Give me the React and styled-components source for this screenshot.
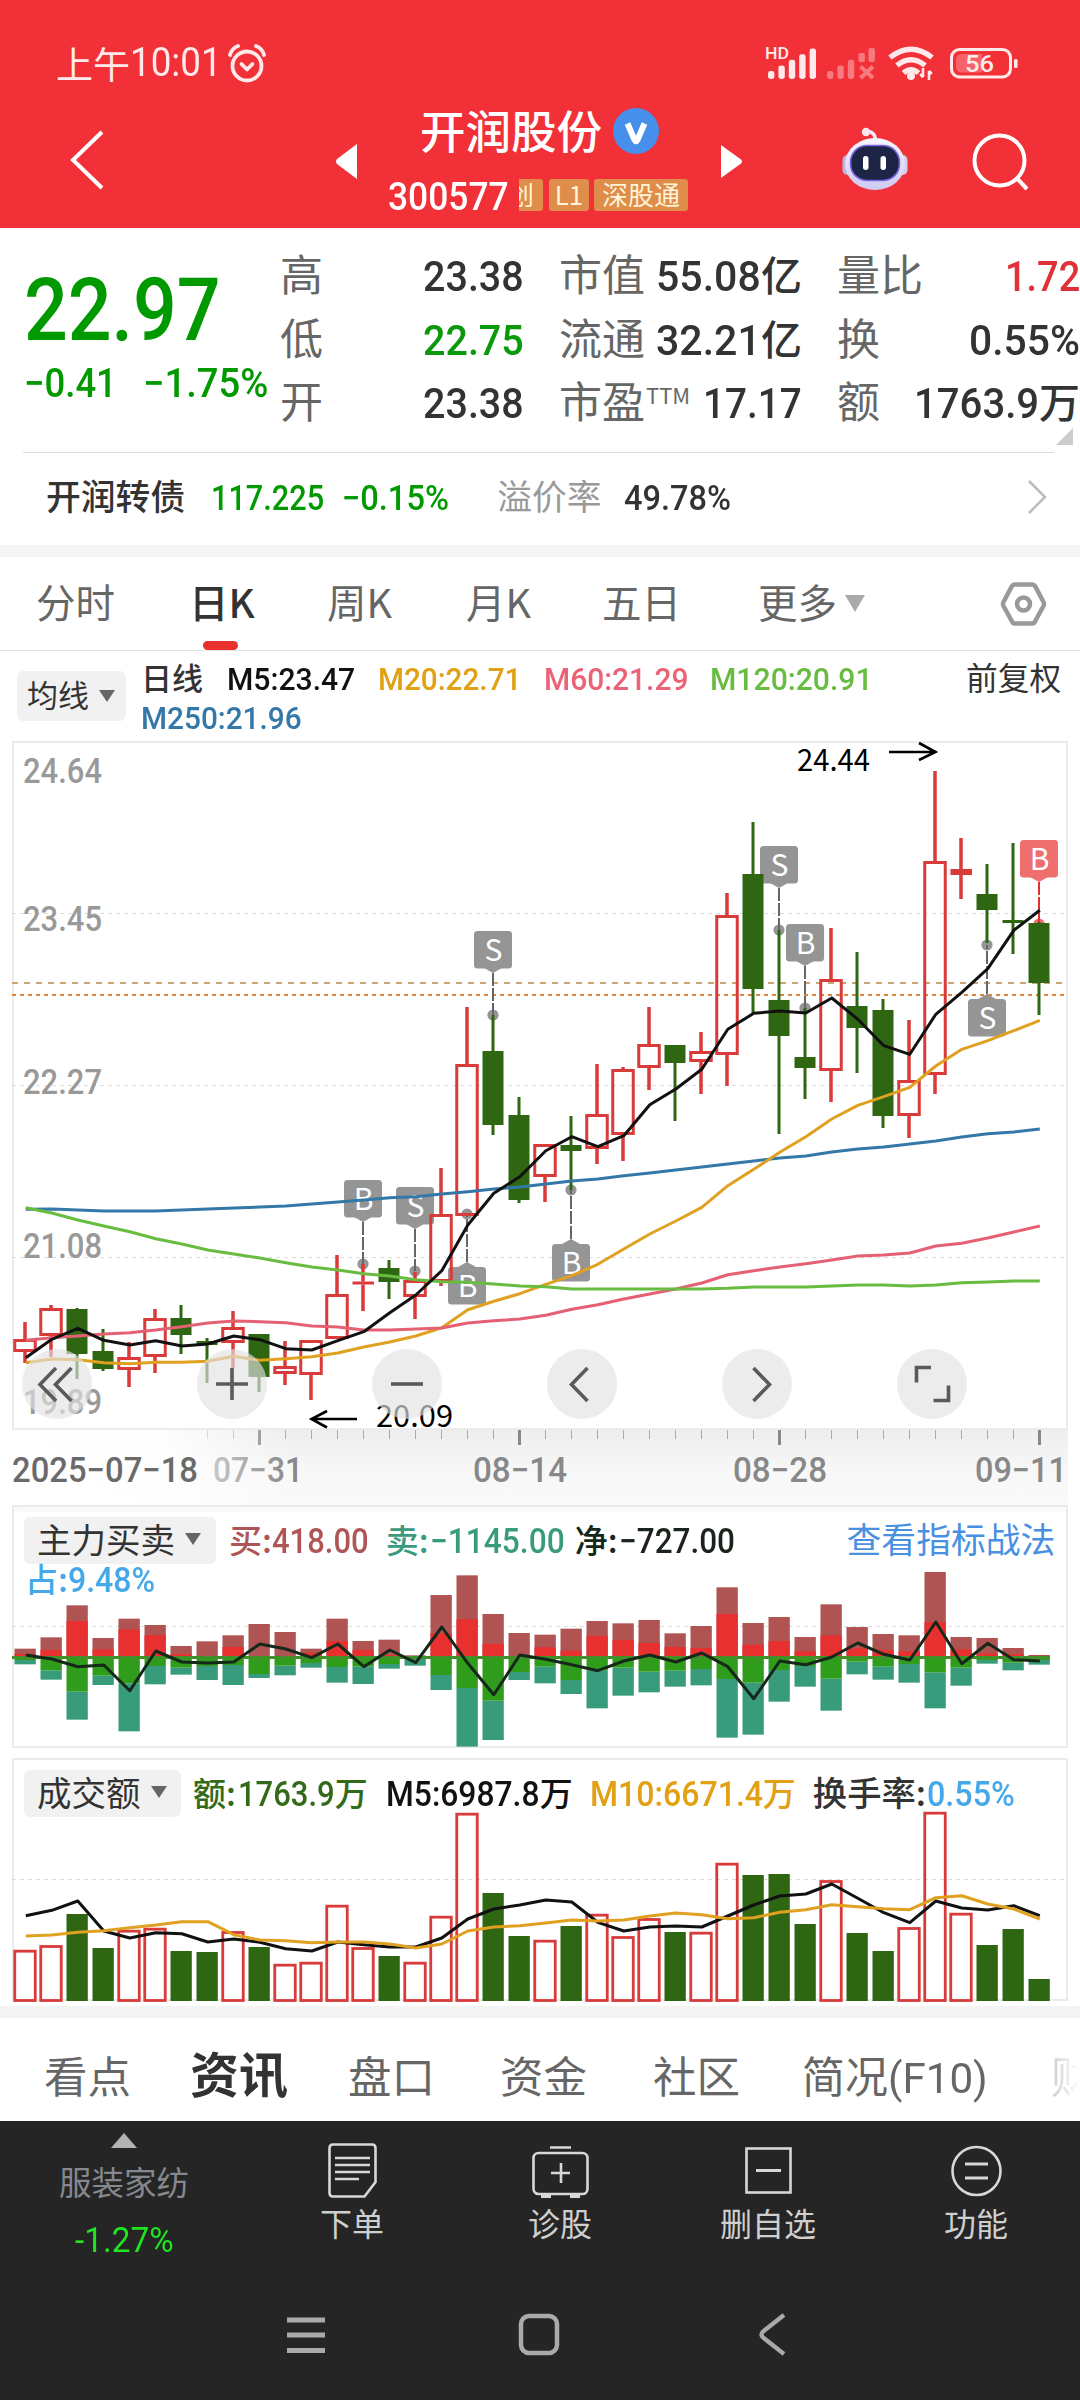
import React, { useLayoutEffect, useRef, useState } from 'react'
import styled, { createGlobalStyle } from 'styled-components'

const CJK = "'Noto Sans CJK SC', sans-serif"
const DIGITS = "Roboto, 'Noto Sans CJK SC', sans-serif"

const RED = '#e83030'
const LINE_RED = '#d93a3a'
const GREEN = '#2f6612'
const DOWN = '#009900'

const GlobalStyle = createGlobalStyle`
  * {
    box-sizing: border-box;
  }
  body {
    margin: 0;
    background: #fff;
    font-family: ${CJK};
    color: #333;
  }
  svg {
    display: block;
    flex: none;
  }
`

const Screen = styled.div`
  width: 1080px;
  height: 2400px;
  overflow: hidden;
  display: flex;
  flex-direction: column;
`

/* ---------- condensed label ---------- */

const FitBox = styled.span`
  display: inline-block;
  flex: none;
  width: ${p => p.$w}px;
  margin-left: ${p => p.$ml || 0}px;
  font-family: ${DIGITS};
  font-size: ${p => p.$size}px;
  font-weight: ${p => p.$weight || 500};
  color: ${p => p.$color || 'inherit'};
  white-space: nowrap;
`

const FitInner = styled.span`
  display: inline-block;
  transform-origin: 0 50%;
`

// squeezes a run of digits to the width of a condensed face
const Fit = ({ w, size, ml, color, weight, children }) => {
  const ref = useRef(null)
  const [scale, setScale] = useState(1)
  useLayoutEffect(() => {
    setScale(w / ref.current.offsetWidth)
  }, [w, size, children])
  return (
    <FitBox $w={w} $size={size} $ml={ml} $color={color} $weight={weight}>
      <FitInner ref={ref} style={{ transform: `scaleX(${scale})` }}>
        {children}
      </FitInner>
    </FitBox>
  )
}

const Txt = styled.span`
  flex: none;
  margin-left: ${p => p.$ml || 0}px;
  font-size: ${p => p.$size}px;
  font-weight: ${p => p.$weight || 400};
  color: ${p => p.$color || 'inherit'};
  white-space: nowrap;
`

/* ---------- header ---------- */

const Header = styled.header`
  height: 228px;
  flex: none;
  background: #f13037;
  color: #fff;
`

const StatusBar = styled.div`
  height: 102px;
  padding: 40px 57px 0 56px;
  display: flex;
  justify-content: space-between;
`

const StatusSide = styled.div`
  display: flex;
  align-items: flex-start;
  height: 46px;
  line-height: 46px;
  color: #ffe9ea;
`

const TitleBar = styled.div`
  display: flex;
  height: 126px;
`

const TitleSlot = styled.div`
  width: ${p => p.$w}px;
  padding-top: ${p => p.$top}px;
  padding-left: ${p => p.$left || 0}px;
`

const TitleRow = styled.div`
  display: flex;
  height: 58px;
  padding-left: 60px;
  font-size: 45.5px;
  font-weight: 500;
  line-height: 54px;
  & svg {
    margin: 6px 0 0 11px;
  }
`

const CodeRow = styled.div`
  display: flex;
  align-items: center;
  height: 36px;
  margin-top: 17px;
  padding-left: 28px;
`

const CodeText = styled.div`
  padding-top: 3px;
`

const Tag = styled.span`
  width: ${p => p.$w}px;
  height: 32px;
  margin-left: ${p => p.$ml}px;
  display: flex;
  justify-content: ${p => (p.$cut ? 'flex-end' : 'center')};
  overflow: ${p => (p.$cut ? 'hidden' : 'visible')};
  padding-right: ${p => (p.$cut ? 9 : 0)}px;
  border-radius: ${p => (p.$cut ? '0 3px 3px 0' : '3px')};
  background: #df8d4a;
  color: #fff3d8;
  font-size: 26px;
  line-height: 29px;
  white-space: nowrap;
`

const AlarmIcon = () => (
  <svg width='38' height='40' viewBox='0 0 38 40' fill='none' stroke='#ffe9ea' strokeWidth='3.8' style={{ marginLeft: 6, marginTop: 4 }}>
    <circle cx='19' cy='22' r='14.5' />
    <path d='M2 11 Q3.5 4.5 10 2 M36 11 Q34.5 4.5 28 2' strokeLinecap='round' />
    <path d='M13.5 20 L19 25.5 L24.5 20' strokeLinecap='round' strokeLinejoin='round' />
  </svg>
)

const SignalIcons = () => (
  <svg width='258' height='46' viewBox='765 40 258 46' fill='#ffe9ea'>
    <text x='765' y='59' fontSize='16' fontFamily='Roboto' fontWeight='500' textLength='24' lengthAdjust='spacingAndGlyphs'>HD</text>
    {[0, 1, 2, 3, 4].map(i => (
      <rect key={i} x={768 + i * 10.4} y={71 - i * 5.6} width='6.4' height={8 + i * 5.6} rx='2.4' />
    ))}
    <g opacity='.4'>
      {[0, 1, 2].map(i => (
        <rect key={i} x={827 + i * 10.4} y={71 - i * 5.6} width='6.4' height={8 + i * 5.6} rx='2.4' />
      ))}
      <rect x='858.5' y='53' width='6.4' height='9' rx='2' />
      <rect x='868.5' y='48' width='6.4' height='14' rx='2' />
      <path d='M860.5 66.5 L873 78 M873 66.5 L860.5 78' stroke='#ffe9ea' strokeWidth='4' />
    </g>
    <g fill='none' stroke='#ffe9ea' strokeWidth='5.4'>
      <path d='M890 57.5 Q911 41 932 57.5' />
      <path d='M897 65.5 Q911 54 925 65.5' />
      <path d='M903.5 73 Q911 66.5 918.5 73' />
    </g>
    <circle cx='911' cy='76' r='4' />
    <path d='M923 68 v9 M920.2 74 l2.8 3.4 M929 80 v-9 M931.8 74 l-2.8 -3' stroke='#ffe9ea' strokeWidth='2.6' fill='none' />
    <rect x='951.5' y='49.5' width='59' height='27.5' rx='8' fill='none' stroke='#ffe9ea' strokeWidth='3' />
    <path d='M962 54 h20 v18.5 h-20 q-6 0 -6 -6 v-6.5 q0 -6 6 -6z' opacity='.28' />
    <rect x='1014' y='59' width='3.6' height='9' rx='1.5' />
    <text x='965' y='72' fontSize='24' fontFamily='Roboto' fontWeight='500' textLength='29' lengthAdjust='spacingAndGlyphs'>56</text>
  </svg>
)

const RobotIcon = () => (
  <svg width='68' height='66' viewBox='0 0 68 66'>
    <defs>
      <linearGradient id='shell' x1='0' y1='0' x2='0' y2='1'>
        <stop offset='0' stopColor='#f8f6ff' />
        <stop offset='1' stopColor='#cfc9f0' />
      </linearGradient>
    </defs>
    <path d='M33 14 Q34 6 24 5' stroke='#f3e9fb' strokeWidth='3.5' fill='none' />
    <circle cx='24' cy='6' r='4.2' fill='#fbe6f0' />
    <rect x='0.500' y='29' width='10' height='20' rx='5' fill='#b9b4e6' />
    <rect x='55.500' y='29' width='10' height='20' rx='5' fill='#d6cff2' />
    <ellipse cx='33' cy='38' rx='30' ry='26' fill='url(#shell)' />
    <rect x='8.500' y='19.500' width='49' height='35' rx='16.500' fill='#1d2547' stroke='#7a66e0' strokeWidth='1.600' />
    <rect x='21' y='30' width='5.500' height='14' rx='2.700' fill='#fff' />
    <rect x='38.500' y='30' width='5.500' height='14' rx='2.700' fill='#fff' />
  </svg>
)

const TopHeader = () => (
  <Header>
    <StatusBar>
      <StatusSide>
        <Txt $size={37}>上午</Txt>
        <Fit w={92} size={40} weight={400}>10:01</Fit>
        <AlarmIcon />
      </StatusSide>
      <StatusSide>
        <SignalIcons />
      </StatusSide>
    </StatusBar>
    <TitleBar>
      <TitleSlot $w={335} $top={28} $left={69}>
        <svg width='36' height='60' viewBox='0 0 36 60' fill='none' stroke='#fff' strokeWidth='4'>
          <path d='M33 2 L4 30 L33 58' />
        </svg>
      </TitleSlot>
      <TitleSlot $w={25} $top={42}>
        <svg width='22' height='35' viewBox='0 0 22 35' fill='#fff'>
          <path d='M22 0 V35 L2 20 Q0 17.500 2 15 Z' />
        </svg>
      </TitleSlot>
      <TitleSlot $w={361}>
        <TitleRow>
          开润股份
          <svg width='46' height='46' viewBox='0 0 46 46'>
            <circle cx='23' cy='23' r='23' fill='#4690ec' />
            <path d='M14.500 15.500 L21.500 32 Q23 34.500 24.500 32 L31.500 15.500' fill='none' stroke='#fff' strokeWidth='6' />
          </svg>
        </TitleRow>
        <CodeRow>
          <CodeText>
            <Fit w={121} size={38}>300577</Fit>
          </CodeText>
          <Tag $w={24} $ml={10} $cut>创</Tag>
          <Tag $w={40} $ml={6}>L1</Tag>
          <Tag $w={94} $ml={5}>深股通</Tag>
        </CodeRow>
      </TitleSlot>
      <TitleSlot $w={121} $top={43}>
        <svg width='22' height='33' viewBox='0 0 22 33' fill='#fff'>
          <path d='M0 0 V33 L20 18.500 Q22 16.500 20 14.500 Z' />
        </svg>
      </TitleSlot>
      <TitleSlot $w={130} $top={24}>
        <RobotIcon />
      </TitleSlot>
      <TitleSlot $w={70} $top={31}>
        <svg width='58' height='58' viewBox='0 0 58 58' fill='none' stroke='#fff' strokeWidth='4'>
          <circle cx='27.500' cy='27.500' r='25' />
          <path d='M45 45.500 L55 56' />
        </svg>
      </TitleSlot>
    </TitleBar>
  </Header>
)

/* ---------- quote ---------- */

const Quote = styled.section`
  position: relative;
  height: 223px;
  flex: none;
  display: flex;
  padding-top: 13px;
`

const PriceCol = styled.div`
  width: 280px;
  padding-left: 24px;
  flex: none;
`

const BigPrice = styled.div`
  height: 110px;
  padding-top: 11px;
  line-height: 116px;
`

const PriceText = styled.b`
  font-weight: 500;
  color: ${DOWN};
`

const Change = styled.div`
  display: flex;
  line-height: 50px;
  padding-top: 8px;
`

const Stats = styled.div`
  display: grid;
  grid-template-columns: 244px 243px 243px;
  grid-auto-rows: 63.5px;
  column-gap: 35px;
`

const Stat = styled.div`
  display: flex;
  align-items: baseline;
  line-height: 63px;
`

const StatLabel = styled.span`
  flex: 1;
  font-size: 43px;
  color: #666;
  white-space: nowrap;
  & sup {
    font-size: 22px;
    line-height: 0;
    vertical-align: 14px;
    margin-left: 1px;
  }
`

const Corner = styled.i`
  position: absolute;
  right: 7px;
  bottom: 6px;
  border-left: 17px solid transparent;
  border-bottom: 17px solid #ccc;
`

const Divider = styled.div`
  height: 1px;
  margin: 1px 26px 0 23px;
  flex: none;
  background: #ddd;
`

const Bond = styled.section`
  display: flex;
  align-items: baseline;
  height: 92px;
  flex: none;
  line-height: 84px;
  padding-left: 46px;
  & svg {
    margin-left: 297px;
    align-self: center;
    margin-bottom: 4px;
  }
`

const Band = styled.div`
  height: 12px;
  flex: none;
  background: #f4f4f4;
`

const STATS = [
  { label: '高', value: '23.38', w: 101 },
  { label: '市值', value: '55.08', w: 105, unit: '亿' },
  { label: '量比', value: '1.72', w: 75, color: '#e03038' },
  { label: '低', value: '22.75', w: 101, color: '#0a990a' },
  { label: '流通', value: '32.21', w: 105, unit: '亿' },
  { label: '换', value: '0.55%', w: 111 },
  { label: '开', value: '23.38', w: 101 },
  { label: '市盈', sup: 'TTM', value: '17.17', w: 99 },
  { label: '额', value: '1763.9', w: 125, unit: '万' },
]

const QuotePanel = () => (
  <>
    <Quote>
      <PriceCol>
        <BigPrice>
          <Fit w={197} size={88}>
            <PriceText>22.97</PriceText>
          </Fit>
        </BigPrice>
        <Change>
          <Fit w={93} size={40} color={DOWN}>−0.41</Fit>
          <Fit w={125} size={40} ml={26} color={DOWN}>−1.75%</Fit>
        </Change>
      </PriceCol>
      <Stats>
        {STATS.map(s => (
          <Stat key={s.label}>
            <StatLabel>
              {s.label}
              {s.sup && <sup>{s.sup}</sup>}
            </StatLabel>
            <Fit w={s.w} size={43} color={s.color}>{s.value}</Fit>
            {s.unit && <Txt $size={41} $weight={500}>{s.unit}</Txt>}
          </Stat>
        ))}
      </Stats>
      <Corner />
    </Quote>
    <Divider />
    <Bond>
      <Txt $size={34.8} $weight={500}>开润转债</Txt>
      <Fit w={113} size={35} ml={26} color={DOWN}>117.225</Fit>
      <Fit w={107} size={35} ml={18} color={DOWN}>−0.15%</Fit>
      <Txt $size={34.8} $ml={48} $color='#999'>溢价率</Txt>
      <Fit w={107} size={35} ml={22}>49.78%</Fit>
      <svg width='20' height='34' viewBox='0 0 20 34' fill='none' stroke='#bbb' strokeWidth='2.500'>
        <path d='M1 1 L17 17 L1 33' />
      </svg>
    </Bond>
    <Band />
  </>
)

/* ---------- period tabs and MA legend ---------- */

const Periods = styled.nav`
  display: flex;
  height: 94px;
  flex: none;
  border-bottom: 1px solid #e2e2e2;
  padding-left: 36px;
`

const Period = styled.div`
  position: relative;
  display: flex;
  width: ${p => p.$w}px;
  font-size: 39.5px;
  line-height: 88px;
  font-weight: ${p => (p.$on ? 500 : 400)};
  color: ${p => (p.$on ? '#333' : '#666')};
  white-space: nowrap;
  &::after {
    content: '';
    display: ${p => (p.$on ? 'block' : 'none')};
    position: absolute;
    left: 14px;
    bottom: 0;
    width: 35px;
    height: 9px;
    border-radius: 5px;
    background: ${RED};
  }
`

const Caret = styled.i`
  display: inline-block;
  flex: none;
  width: 0;
  height: 0;
  border: ${p => p.$w / 2}px solid transparent;
  border-top: ${p => p.$h}px solid ${p => p.$color};
  border-bottom: 0;
  margin: ${p => p.$mt || 0}px 0 0 ${p => p.$ml}px;
`

const Legend = styled.section`
  display: flex;
  height: 90px;
  flex: none;
  padding: 20px 0 0 17px;
`

const Pill = styled.div`
  display: flex;
  align-items: center;
  flex: none;
  width: ${p => p.$w}px;
  height: ${p => p.$h}px;
  padding-left: ${p => p.$pl}px;
  border-radius: 6px;
  background: #f1f1f1;
  font-size: ${p => p.$size}px;
  line-height: ${p => p.$h - 6}px;
  padding-bottom: 4px;
  white-space: nowrap;
`

const LegendText = styled.div`
  margin: -14px 0 0 15px;
`

const LegendRow = styled.div`
  display: flex;
  align-items: baseline;
  line-height: 39px;
`

const LegendPanel = () => (
  <Legend>
    <Pill $w={109} $h={50} $pl={10} $size={31}>
      均线
      <Caret $w={17} $h={12} $ml={10} $mt={4} $color='#666' />
    </Pill>
    <LegendText>
      <LegendRow>
        <Txt $size={31} $weight={500}>日线</Txt>
        <Fit w={128} size={32} ml={24} color='#111'>M5:23.47</Fit>
        <Fit w={143} size={32} ml={23} color='#e2a014'>M20:22.71</Fit>
        <Fit w={144} size={32} ml={23} color='#ec6378'>M60:21.29</Fit>
        <Fit w={163} size={32} ml={22} color='#68bd41'>M120:20.91</Fit>
        <Txt $size={31.7} $ml={93}>前复权</Txt>
      </LegendRow>
      <LegendRow>
        <Fit w={161} size={32} color='#3478a8'>M250:21.96</Fit>
      </LegendRow>
    </LegendText>
  </Legend>
)

const PeriodTabs = () => (
  <Periods>
    <Period $w={153}>分时</Period>
    <Period $w={138} $on>日K</Period>
    <Period $w={139}>周K</Period>
    <Period $w={136}>月K</Period>
    <Period $w={156}>五日</Period>
    <Period $w={242}>
      更多
      <Caret $w={20} $h={17} $ml={8} $mt={38} $color='#aaa' />
    </Period>
    <svg width='48' height='46' viewBox='0 0 48 46' fill='none' stroke='#999' strokeWidth='4.500' style={{ marginTop: 24 }}>
      <path d='M14.500 3.500 H32.500 Q34 3.500 35 5 L43.500 21 Q44.500 23 43.500 25 L35 40.500 Q34 42.500 32.500 42.500 H14.500 Q13 42.500 12 40.500 L3.500 25 Q2.500 23 3.500 21 L12 5 Q13 3.500 14.500 3.500Z' />
      <circle cx='23.500' cy='23' r='6.500' />
    </svg>
  </Periods>
)

/* ---------- chart data ---------- */

// r/g, high, body top, body bottom, low
const CANDLES = [
  ['r', 1322, 1339, 1352, 1363],
  ['r', 1305, 1308, 1336, 1357],
  ['g', 1308, 1309, 1354, 1379],
  ['g', 1329, 1351, 1369, 1371],
  ['r', 1342, 1357, 1370, 1387],
  ['r', 1309, 1318, 1357, 1373],
  ['g', 1305, 1318, 1335, 1354],
  ['g', 1338, 1341, 1345, 1383],
  ['r', 1311, 1327, 1343, 1368],
  ['g', 1334, 1334, 1377, 1392],
  ['r', 1341, 1366, 1374, 1385],
  ['r', 1340, 1340, 1375, 1400],
  ['r', 1255, 1294, 1339, 1338],
  ['r', 1264, 1281.5, 1284.5, 1311],
  ['g', 1260, 1268, 1282, 1299],
  ['r', 1272, 1280, 1297, 1319],
  ['r', 1168, 1214, 1282, 1286],
  ['r', 1007, 1064, 1216, 1215],
  ['g', 1015, 1051, 1125, 1135],
  ['g', 1097, 1115, 1200, 1203],
  ['r', 1144, 1144, 1177, 1202],
  ['g', 1116, 1145, 1151, 1190],
  ['r', 1064, 1114, 1149, 1164],
  ['r', 1067, 1069, 1135, 1161],
  ['r', 1007, 1044, 1068, 1090],
  ['g', 1045, 1045, 1063, 1121],
  ['r', 1032, 1051, 1062, 1094],
  ['r', 893, 915, 1055, 1086],
  ['g', 822, 874, 989, 1014],
  ['g', 930, 1000, 1036, 1134],
  ['g', 1008, 1057, 1068, 1099],
  ['r', 928, 979, 1071, 1102],
  ['g', 952, 1006, 1028, 1073],
  ['g', 999, 1010, 1116, 1128],
  ['r', 1020, 1080, 1116, 1138],
  ['r', 771, 861, 1075, 1094],
  ['r', 838, 869, 875, 899],
  ['g', 864, 894, 910, 943],
  ['g', 843, 920, 923, 954],
  ['g', 922, 923, 983, 1015],
]

// averages, in thirds of a pixel from y = 1100
const AVERAGES = [
  ['#3478a8', [328, 327, 330, 333, 333, 333, 330, 327, 324, 321, 318, 312, 306, 300, 293, 290, 282, 275, 267, 261, 252, 243, 237, 227, 219, 210, 201, 192, 183, 174, 168, 156, 147, 141, 132, 123, 111, 101, 96, 87]],
  ['#e0a020', [788, 777, 779, 788, 791, 787, 787, 784, 769, 781, 776, 770, 759, 741, 726, 708, 683, 629, 604, 581, 553, 527, 493, 447, 402, 363, 322, 257, 208, 157, 110, 57, 16, -10, -38, -102, -152, -178, -208, -239]],
  ['#e66074', [721, 713, 708, 702, 698, 690, 680, 669, 663, 665, 668, 678, 681, 690, 690, 687, 684, 669, 662, 657, 646, 628, 614, 597, 582, 567, 549, 524, 512, 501, 491, 480, 468, 465, 459, 438, 430, 414, 396, 378]],
  ['#68bd41', [323, 339, 360, 378, 395, 416, 432, 450, 462, 474, 488, 501, 510, 521, 528, 539, 545, 547, 552, 558, 560, 567, 567, 567, 567, 567, 567, 565, 561, 561, 561, 558, 555, 555, 558, 555, 548, 546, 543, 543]],
  ['#111', [773, 718, 685, 721, 735, 722, 738, 732, 708, 719, 746, 750, 722, 695, 638, 585, 512, 375, 280, 230, 152, 110, 140, 107, 14, -33, -92, -212, -260, -267, -261, -306, -242, -163, -137, -257, -323, -394, -509, -569]],
]

// index, letter, box top, dot
const MARKS = [
  [13, 'B', 1180, 1264],
  [15, 'S', 1187, 1271],
  [17, 'B', 1267, 1214],
  [18, 'S', 931, 1015],
  [21, 'B', 1244, 1190],
  [29, 'S', 846, 930],
  [30, 'B', 924, 1008],
  [37, 'S', 999, 945],
  [39, 'B', 840, 924],
]

// outer red, inner red, inner green, outer green
const FLOW = [
  [476, 492, 510, 523], [442, 480, 541, 569], [346, 393, 605, 689], [444, 478, 557, 585],
  [386, 418, 580, 724], [405, 436, 528, 583], [468, 492, 533, 554], [454, 498, 528, 570],
  [436, 471, 525, 585], [402, 498, 552, 564], [426, 498, 527, 556], [476, 488, 519, 533],
  [386, 453, 531, 578], [453, 480, 530, 582], [449, 495, 522, 536], [496, 498, 507, 527],
  [315, 430, 555, 600], [256, 388, 594, 770], [372, 461, 632, 750], [429, 498, 546, 570],
  [434, 472, 530, 580], [416, 482, 570, 612], [393, 438, 542, 655], [400, 450, 533, 617],
  [390, 459, 545, 607], [430, 471, 542, 590], [408, 474, 537, 586], [292, 372, 567, 743],
  [399, 464, 578, 734], [381, 453, 540, 635], [441, 484, 528, 590], [343, 436, 566, 662],
  [411, 475, 515, 553], [432, 480, 530, 569], [436, 484, 522, 578], [246, 396, 547, 655],
  [441, 478, 533, 587], [444, 490, 510, 521], [474, 492, 518, 541], [495, 497, 510, 524],
]
const NET = [495, 507, 530, 525, 602, 483, 516, 519, 516, 462, 477, 503, 462, 530, 480, 518, 411, 520, 614, 495, 508, 524, 542, 513, 495, 516, 489, 530, 626, 513, 524, 501, 459, 493, 510, 396, 521, 460, 509, 513]

const TURNOVER = [602, 588, 492, 594, 542, 536, 603, 606, 546, 591, 644, 638, 467, 594, 618, 638, 500, 191, 429, 558, 572, 528, 494, 561, 507, 546, 548, 341, 375, 372, 522, 393, 549, 603, 534, 188, 491, 585, 537, 687]
const TURN_M5 = [497, 481, 453, 543, 564, 548, 551, 576, 567, 577, 596, 603, 576, 584, 591, 591, 564, 507, 477, 465, 450, 456, 517, 543, 531, 528, 531, 498, 465, 438, 432, 402, 445, 488, 518, 453, 474, 480, 467, 497]
const TURN_M10 = [558, 555, 547, 542, 533, 525, 515, 515, 554, 570, 572, 578, 576, 576, 582, 594, 582, 543, 531, 527, 519, 510, 513, 510, 498, 489, 494, 506, 503, 487, 479, 464, 470, 476, 479, 443, 437, 462, 477, 507]

const xAt = i => 25 + 26 * i
const points = (values, base) =>
  values.map((v, i) => `${xAt(i) + 0.8},${(base + v / 3).toFixed(1)}`).join(' ')

/* ---------- charts ---------- */

const ChartText = ({ x, y, w, size = 35, fill = '#999', weight = 500, children }) => (
  <text x={x} y={y} fontFamily={DIGITS} fontSize={size} fontWeight={weight} fill={fill} textLength={w} lengthAdjust='spacingAndGlyphs'>
    {children}
  </text>
)

const Dash = ({ y, color = '#ddd', width = 1, dash = '4 4' }) => (
  <line x1='12' x2='1066' y1={y} y2={y} stroke={color} strokeWidth={width} strokeDasharray={dash} />
)

const Polyline = ({ color, pts, width = 3 }) => (
  <polyline points={pts} fill='none' stroke={color} strokeWidth={width} strokeLinejoin='round' />
)

const Frame = ({ y, h }) => (
  <rect x='13' y={y} width='1054' height={h} fill='none' stroke='#ebebeb' strokeWidth='2' />
)

const Mark = ({ i, letter, top, dot }) => {
  const x = xAt(i)
  const last = i === 39
  const above = dot > top
  const fill = last ? '#ef6e6e' : '#959595'
  const edge = above ? top + 37 : top
  const tip = above ? edge + 5 : edge - 5
  return (
    <g>
      <rect x={x - 19} y={top} width='38' height='37.500' rx='3.500' fill={fill} />
      <path d={`M${x - 9} ${edge} L${x} ${tip} L${x + 9} ${edge}Z`} fill={fill} />
      <circle cx={x} cy={dot} r='5.600' fill={fill} />
      <line x1={x} x2={x} y1={tip} y2={dot} stroke={last ? '#e03030' : '#666'} strokeWidth='2' strokeDasharray='13 2' />
      <text x={x + 0.5} y={top + 30} textAnchor='middle' fontFamily={CJK} fontSize='30' fill='#fff'>{letter}</text>
    </g>
  )
}

const Candle = ({ i, data }) => {
  const [kind, high, top, bottom, low] = data
  const x = xAt(i)
  if (kind === 'g') {
    return (
      <g fill={GREEN}>
        <rect x={x - 1.5} y={high} width='3' height={low - high} />
        <rect x={x - 10.5} y={top} width='21' height={bottom - top} />
      </g>
    )
  }
  const thin = bottom - top < 7
  return (
    <g fill={LINE_RED}>
      <rect x={x - 1.75} y={high} width='3.500' height={Math.max(top - high, 0)} />
      <rect x={x - 1.75} y={bottom} width='3.500' height={Math.max(low - bottom, 0)} />
      {thin ? (
        <rect x={x - 10.5} y={top} width='21.500' height={bottom - top} />
      ) : (
        <rect x={x - 10.25} y={top + 1.5} width='20.500' height={bottom - top - 3} fill='none' stroke={LINE_RED} strokeWidth='3' />
      )}
    </g>
  )
}

const ChartArea = styled.section`
  position: relative;
  height: 689px;
  flex: none;
`

const Controls = styled.div`
  position: absolute;
  left: 22px;
  bottom: 11px;
  display: flex;
  gap: 105px;
`

const RoundButton = styled.button`
  width: 70px;
  height: 70px;
  padding: 0;
  border: 0;
  border-radius: 50%;
  background: rgba(226, 226, 226, 0.65);
`

const BUTTONS = [
  'M34 19 L18 35.500 L34 52 M49.500 19 L33.500 35.500 L49.500 52',
  'M35 19 V51 M19 35 H51',
  'M19 35 H51',
  'M40.500 19 L24.500 35.500 L40.500 52',
  'M31.500 19 L47.500 35.500 L31.500 52',
  'M34 18.500 H19.500 V33.500 M51.500 36.500 V51.500 H36.500',
]

const CandleChart = () => (
  <ChartArea>
    <svg width='1080' height='689' viewBox='0 741 1080 689'>
      <Frame y={742} h={687} />
      <Dash y={913.5} />
      <Dash y={1085.5} />
      <Dash y={1257.5} />
      <Dash y={983} color='#c9a574' width={2} dash='6 6' />
      <Dash y={995} color='#e08338' width={2} dash='4 4' />
      <ChartText x={23} y={783} w={79}>24.64</ChartText>
      <ChartText x={23} y={931} w={79}>23.45</ChartText>
      <ChartText x={23} y={1094} w={79}>22.27</ChartText>
      <ChartText x={23} y={1258} w={79}>21.08</ChartText>
      <ChartText x={23} y={1414} w={79}>19.89</ChartText>
      {MARKS.map(([i, letter, top, dot]) => (
        <Mark key={i} i={i} letter={letter} top={top} dot={dot} />
      ))}
      {CANDLES.map((c, i) => (
        <Candle key={i} i={i} data={c} />
      ))}
      {AVERAGES.map(([color, values]) => (
        <Polyline key={color} color={color} pts={points(values, 1100)} />
      ))}
      <g fill='none' stroke='#000' strokeWidth='2.600'>
        <path d='M889 752 H935 M919 743 L935.500 752 L919 760' />
        <path d='M357 1419 H312 M327 1411 L311.500 1419 L327 1427.500' />
      </g>
      <text x='797' y='771' fontFamily={CJK} fontSize='30' textLength='73' lengthAdjust='spacingAndGlyphs'>24.44</text>
      <text x='376' y='1427' fontFamily={CJK} fontSize='30' textLength='77' lengthAdjust='spacingAndGlyphs'>20.09</text>
    </svg>
    <Controls>
      {BUTTONS.map(d => (
        <RoundButton key={d}>
          <svg width='70' height='70' viewBox='0 0 70 70' fill='none' stroke='#5a5a5a' strokeWidth='3.600'>
            <path d={d} />
          </svg>
        </RoundButton>
      ))}
    </Controls>
  </ChartArea>
)

const DateAxis = () => (
  <svg width='1080' height='75' viewBox='0 1430 1080 75'>
    <defs>
      <linearGradient id='down' x1='0' y1='0' x2='0' y2='1'>
        <stop offset='0' stopColor='#eee' />
        <stop offset='.5' stopColor='#f7f7f7' />
        <stop offset='1' stopColor='#fafafa' />
      </linearGradient>
      <linearGradient id='fade'>
        <stop offset='0' stopColor='#fff' />
        <stop offset='.55' stopColor='#fff' stopOpacity='.9' />
        <stop offset='1' stopColor='#fff' stopOpacity='0' />
      </linearGradient>
    </defs>
    <rect x='12' y='1430' width='1056' height='75' fill='url(#down)' />
    {CANDLES.map((c, i) => {
      if (i < 7) return null
      const major = i % 10 === 9
      return (
        <rect key={i} x={xAt(i) + (major ? -1 : 0)} y='1430' width={major ? 3 : 1} height={major ? 15 : 9} fill={major ? '#888' : '#aaa'} />
      )
    })}
    <ChartText x={213} y={1482} w={90} fill='#888'>07−31</ChartText>
    <rect x='0' y='1430' width='290' height='75' fill='url(#fade)' />
    <ChartText x={12} y={1482} w={186} fill='#6a6a6a'>2025−07−18</ChartText>
    <ChartText x={473} y={1482} w={94} fill='#888'>08−14</ChartText>
    <ChartText x={733} y={1482} w={94} fill='#888'>08−28</ChartText>
    <ChartText x={975} y={1482} w={92} fill='#888'>09−11</ChartText>
  </svg>
)

const SubPanel = styled.section`
  position: relative;
  height: ${p => p.$h}px;
  flex: none;
  padding: 12px 0 0 24px;
  & > svg {
    position: absolute;
    left: 0;
    top: 0;
  }
`

const SubHead = styled.div`
  position: relative;
  display: flex;
  align-items: baseline;
  height: 41px;
  line-height: 41px;
`

const FlowPanel = () => (
  <SubPanel $h={253}>
    <svg width='1080' height='253' viewBox='0 1505 1080 253'>
      <rect x='12' y='1505' width='1056' height='7' fill='#fafafa' />
      <Frame y={1506} h={241} />
      <Dash y={1626.5} />
      {FLOW.map(([a, b, c, d], i) => {
        const x = xAt(i) - 10.5
        const y = v => 1490 + v / 3
        return (
          <g key={i}>
            <rect x={x} y={y(a)} width='21.300' height={(498 - a) / 3} fill='#b05353' />
            <rect x={x} y={y(b)} width='21.300' height={(498 - b) / 3} fill={RED} />
            <rect x={x} y={y(c)} width='21.300' height={(d - c) / 3} fill='#389b7c' />
            <rect x={x} y={y(502)} width='21.300' height={(c - 502) / 3} fill='#2f9c1b' />
          </g>
        )
      })}
      <line x1='12' x2='1050' y1='1657.500' y2='1657.500' stroke='#41902a' strokeWidth='3' />
      <Polyline color='#16281a' pts={points(NET, 1490)} />
    </svg>
    <SubHead>
      <Pill $w={192} $h={47} $pl={13} $size={34.5}>
        主力买卖
        <Caret $w={17} $h={12} $ml={10} $mt={1} $color='#666' />
      </Pill>
      <Txt $size={33} $ml={13} $weight={500} $color='#b05555'>买:</Txt>
      <Fit w={97} size={34.5} ml={0} color='#b05555'>418.00</Fit>
      <Txt $size={33} $ml={17} $weight={500} $color='#3a9a7c'>卖:</Txt>
      <Fit w={135} size={34.5} ml={1} color='#3a9a7c'>−1145.00</Fit>
      <Txt $size={33} $ml={10} $weight={500} $color='#16281a'>净:</Txt>
      <Fit w={116} size={34.5} ml={1} color='#1a241c'>−727.00</Fit>
      <Txt $size={34.8} $ml={112} $color='#4a90e2'>查看指标战法</Txt>
    </SubHead>
    <SubHead>
      <Txt $size={33} $ml={1} $weight={500} $color='#45a8e8'>占:</Txt>
      <Fit w={87} size={35} color='#45a8e8'>9.48%</Fit>
    </SubHead>
  </SubPanel>
)

const TurnoverPanel = () => (
  <SubPanel $h={248}>
    <svg width='1080' height='248' viewBox='0 1758 1080 248'>
      <Frame y={1759} h={241} />
      <Dash y={1879.5} />
      {TURNOVER.map((v, i) => {
        const y = 1750 + v / 3
        return CANDLES[i][0] === 'g' ? (
          <rect key={i} x={xAt(i) - 10.5} y={y} width='21.300' height={2001 - y} fill={GREEN} />
        ) : (
          <rect key={i} x={xAt(i) - 10.25} y={y + 0.5} width='20.500' height={2000 - y} fill='none' stroke={LINE_RED} strokeWidth='2.800' />
        )
      })}
      <Polyline color='#111' pts={points(TURN_M5, 1750)} />
      <Polyline color='#e0a020' pts={points(TURN_M10, 1750)} />
    </svg>
    <SubHead>
      <Pill $w={157} $h={47} $pl={13} $size={34.5}>
        成交额
        <Caret $w={17} $h={12} $ml={10} $mt={1} $color='#666' />
      </Pill>
      <Txt $size={33} $ml={12} $weight={500} $color='#336a1a'>额:</Txt>
      <Fit w={97} size={34.5} ml={2} color='#336a1a'>1763.9</Fit>
      <Txt $size={33} $weight={500} $color='#336a1a'>万</Txt>
      <Fit w={154} size={34.5} ml={18} color='#111'>M5:6987.8</Fit>
      <Txt $size={33} $weight={500} $color='#111'>万</Txt>
      <Fit w={173} size={34.5} ml={17} color='#e2a014'>M10:6671.4</Fit>
      <Txt $size={33} $weight={500} $color='#e2a014'>万</Txt>
      <Txt $size={34.3} $ml={17} $weight={500}>换手率:</Txt>
      <Fit w={88} size={34.5} ml={1} color='#45a8e8'>0.55%</Fit>
    </SubHead>
  </SubPanel>
)

/* ---------- bottom ---------- */

const InfoTabs = styled.nav`
  display: flex;
  align-items: baseline;
  height: 103px;
  flex: none;
  line-height: 108px;
  padding-left: 44px;
  color: #666;
`

const Faded = styled.span`
  font-size: 43px;
  width: 30px;
  margin-left: 63px;
  overflow: hidden;
  color: transparent;
  background: linear-gradient(90deg, #ccc, #fff 28px);
  background-clip: text;
`

const Dock = styled.footer`
  flex: 1;
  background: #252525;
  color: #cfcfcf;
`

const DockRow = styled.div`
  display: flex;
  height: 169px;
`

const Sector = styled.div`
  width: 248px;
  padding-top: 12px;
  display: flex;
  flex-direction: column;
  align-items: center;
  & svg + span {
    line-height: 48px;
    margin: 9px 0 15px;
  }
`

const DockItem = styled.div`
  width: 208px;
  padding-top: 21px;
  display: flex;
  flex-direction: column;
  align-items: center;
  font-size: 32px;
  line-height: 44px;
`

const SystemNav = styled.div`
  display: flex;
  padding: 22px 0 0 286px;
`

const NavSlot = styled.div`
  width: ${p => p.$w}px;
`

const DOCK = [
  {
    label: '下单',
    icon: (
      <>
        <path d='M9 2.500 H48 Q51.500 2.500 51.500 6 V40 L40.500 54.500 H9 Q5.500 54.500 5.500 51 V6 Q5.500 2.500 9 2.500Z' />
        <path d='M11 16 H46 M11 23 H46 M11 30 H46 M11 37 H35' />
      </>
    ),
  },
  {
    label: '诊股',
    icon: (
      <>
        <rect x='1.500' y='11' width='54' height='41' rx='5' />
        <path d='M18 5.500 H39 M29 21 V41 M19 31 H38' />
        <path d='M9 54.500 H19 M38 54.500 H48' strokeWidth='3' />
      </>
    ),
  },
  {
    label: '删自选',
    icon: (
      <>
        <rect x='6.500' y='6.500' width='44' height='44' />
        <path d='M16 28.500 H41' strokeWidth='3' />
      </>
    ),
  },
  {
    label: '功能',
    icon: (
      <>
        <circle cx='28.500' cy='29' r='24' />
        <path d='M17 22 H40 M17 36 H40' strokeWidth='3' />
      </>
    ),
  },
]

const Bottom = () => (
  <>
    <Band />
    <InfoTabs>
      <Txt $size={43.5}>看点</Txt>
      <Txt $size={49} $ml={59} $weight={700} $color='#333'>资讯</Txt>
      <Txt $size={43.5} $ml={60}>盘口</Txt>
      <Txt $size={43.5} $ml={65}>资金</Txt>
      <Txt $size={43.5} $ml={66}>社区</Txt>
      <Txt $size={43} $ml={62}>简况</Txt>
      <Fit w={100} size={43} weight={400}>(F10)</Fit>
      <Faded>财</Faded>
    </InfoTabs>
    <Dock>
      <DockRow>
        <Sector>
          <svg width='26' height='15' viewBox='0 0 26 15' fill='#b3b3b3'>
            <path d='M13 0 L26 15 H0Z' />
          </svg>
          <Txt $size={32.5} $color='#86888f'>服装家纺</Txt>
          <Fit w={99} size={35} weight={400} color='#1fe51f'>-1.27%</Fit>
        </Sector>
        {DOCK.map(item => (
          <DockItem key={item.label}>
            <svg width='57' height='58' viewBox='0 0 57 58' fill='none' stroke='#d8d8d8' strokeWidth='2.600'>
              {item.icon}
            </svg>
            {item.label}
          </DockItem>
        ))}
      </DockRow>
      <SystemNav>
        <NavSlot $w={232}>
          <svg width='40' height='46' viewBox='0 0 40 46' stroke='#aaa' strokeWidth='5'>
            <path d='M1 8 H39 M1 23 H39 M1 38.500 H39' />
          </svg>
        </NavSlot>
        <NavSlot $w={240}>
          <svg width='42' height='46' viewBox='0 0 42 46' fill='none' stroke='#aaa' strokeWidth='4.500'>
            <rect x='3' y='4' width='36' height='37' rx='8' />
          </svg>
        </NavSlot>
        <NavSlot>
          <svg width='30' height='46' viewBox='0 0 30 46' fill='none' stroke='#aaa' strokeWidth='4.200'>
            <path d='M26 3 L5 19.500 Q2 22.500 5 25.500 L26 42' />
          </svg>
        </NavSlot>
      </SystemNav>
    </Dock>
  </>
)

const App = () => (
  <>
    <GlobalStyle />
    <Screen>
      <TopHeader />
      <QuotePanel />
      <PeriodTabs />
      <LegendPanel />
      <CandleChart />
      <DateAxis />
      <FlowPanel />
      <TurnoverPanel />
      <Bottom />
    </Screen>
  </>
)

export default App
